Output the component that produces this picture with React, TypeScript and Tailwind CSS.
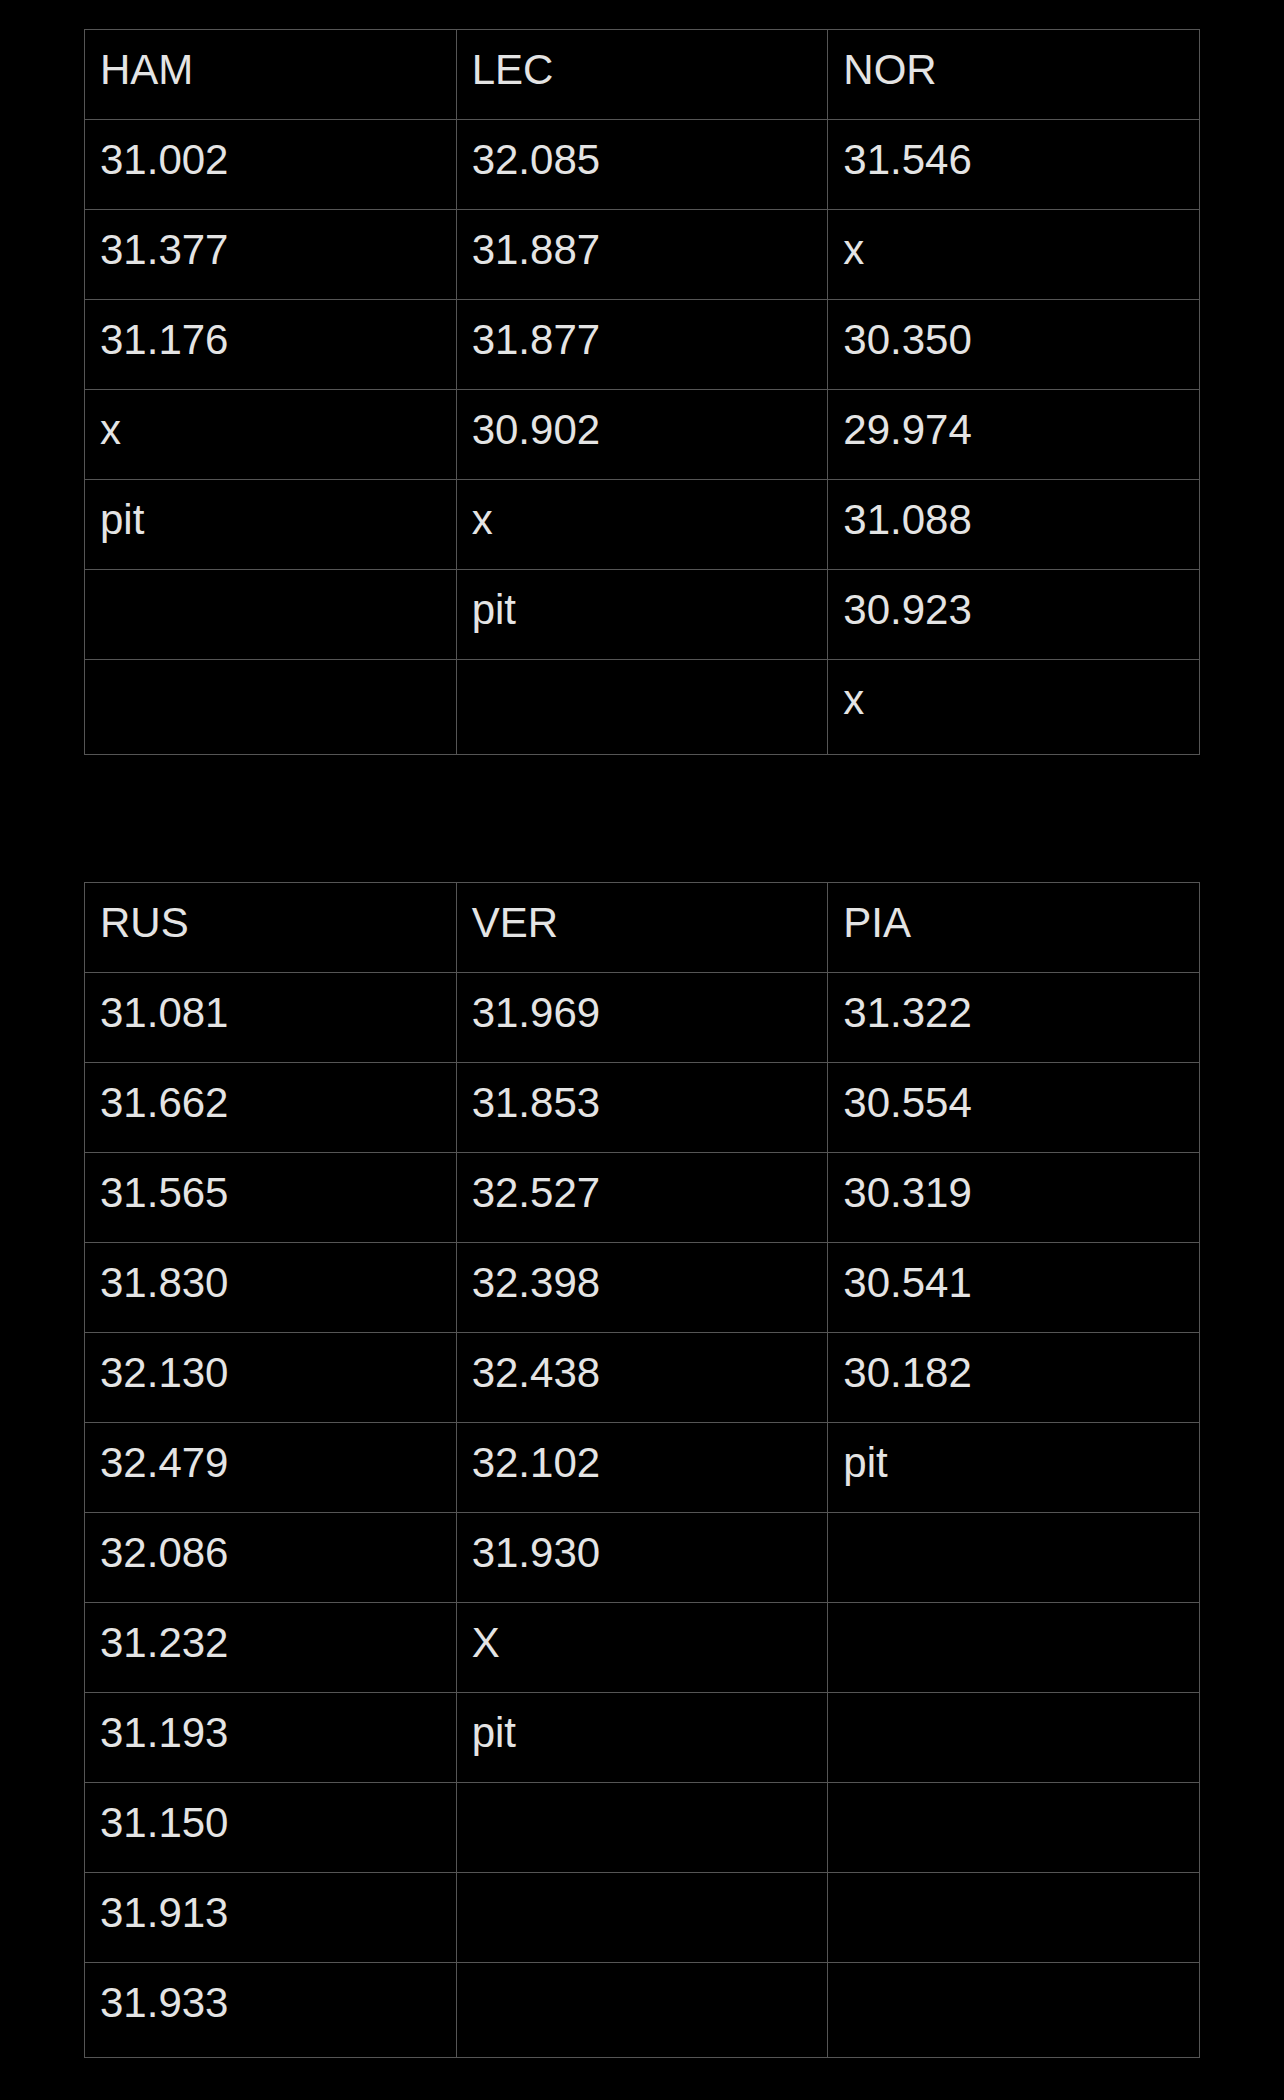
const table1 = [
  ["HAM", "LEC", "NOR"],
  ["31.002", "32.085", "31.546"],
  ["31.377", "31.887", "x"],
  ["31.176", "31.877", "30.350"],
  ["x", "30.902", "29.974"],
  ["pit", "x", "31.088"],
  ["", "pit", "30.923"],
  ["", "", "x"],
];

const table2 = [
  ["RUS", "VER", "PIA"],
  ["31.081", "31.969", "31.322"],
  ["31.662", "31.853", "30.554"],
  ["31.565", "32.527", "30.319"],
  ["31.830", "32.398", "30.541"],
  ["32.130", "32.438", "30.182"],
  ["32.479", "32.102", "pit"],
  ["32.086", "31.930", ""],
  ["31.232", "X", ""],
  ["31.193", "pit", ""],
  ["31.150", "", ""],
  ["31.913", "", ""],
  ["31.933", "", ""],
];

function LapTable({ rows }: { rows: string[][] }) {
  return (
    <div className="grid w-[1116px] grid-cols-3 border-l border-t border-[#555555]">
      {rows.map((row, i) =>
        row.map((cell, j) => (
          <div
            key={`${i}-${j}`}
            className={`border-b border-r border-[#555555] px-[15px] pt-[15px] text-[42px] leading-[50px] text-[#e4e4e4] ${
              i === rows.length - 1 ? "h-[95px]" : "h-[90px]"
            }`}
          >
            {cell}
          </div>
        ))
      )}
    </div>
  );
}

export default function App() {
  return (
    <div
      className="min-h-[2100px] w-[1284px] bg-black pl-[84px] pt-[29px]"
      style={{ fontFamily: '"Liberation Sans", Arial, sans-serif' }}
    >
      <LapTable rows={table1} />
      <div className="h-[127px]" />
      <LapTable rows={table2} />
    </div>
  );
}
